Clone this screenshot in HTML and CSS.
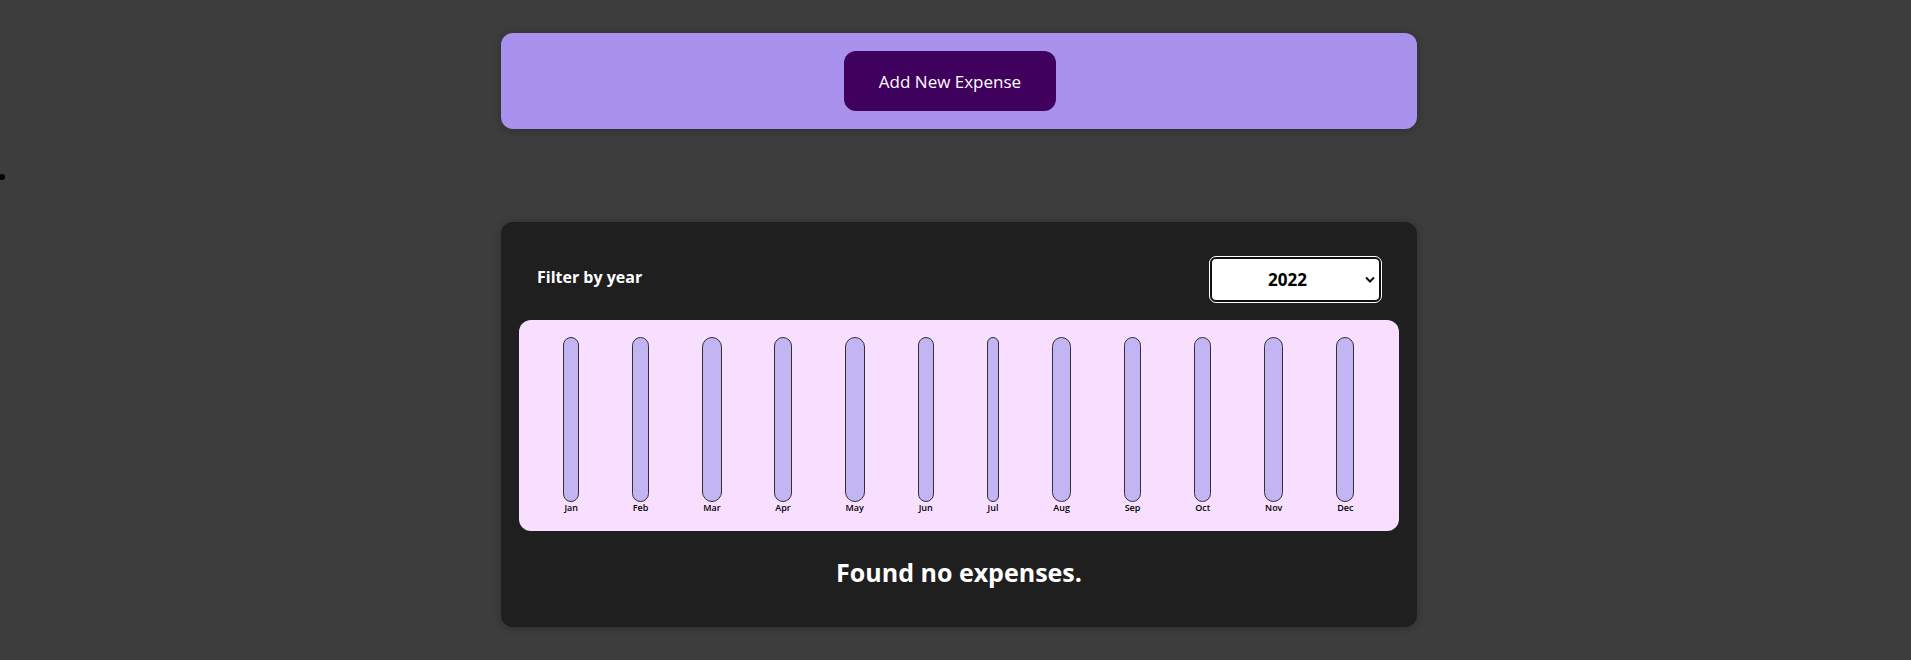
FILE: index.html
```html
<!DOCTYPE html>
<html lang="en">
<head>
<meta charset="utf-8">
<meta name="viewport" content="width=device-width, initial-scale=1">
<title>Expense Tracker</title>
<link rel="stylesheet" href="styles.css">
</head>
<body>
<main class="page">
  <section class="new-expense">
    <button class="new-expense-button" type="button">Add New Expense</button>
  </section>
  <ul class="sections">
    <li class="section">
      <div class="expenses">
        <div class="filter">
          <label class="filter-label" for="year">Filter by year</label>
          <div class="filter-control">
            <select class="filter-select" id="year">
              <option>2025</option>
              <option>2024</option>
              <option>2023</option>
              <option selected>2022</option>
              <option>2021</option>
            </select>
            <svg class="filter-arrow" viewBox="0 0 10 8" aria-hidden="true"><path d="M1 1.5 L5 5.5 L9 1.5" fill="none" stroke="#101010" stroke-width="2"/></svg>
          </div>
        </div>
        <div class="chart">
          <div class="chart-bar"><div class="bar"></div><div class="bar-label">Jan</div></div>
          <div class="chart-bar"><div class="bar"></div><div class="bar-label">Feb</div></div>
          <div class="chart-bar"><div class="bar"></div><div class="bar-label">Mar</div></div>
          <div class="chart-bar"><div class="bar"></div><div class="bar-label">Apr</div></div>
          <div class="chart-bar"><div class="bar"></div><div class="bar-label">May</div></div>
          <div class="chart-bar"><div class="bar"></div><div class="bar-label">Jun</div></div>
          <div class="chart-bar"><div class="bar"></div><div class="bar-label">Jul</div></div>
          <div class="chart-bar"><div class="bar"></div><div class="bar-label">Aug</div></div>
          <div class="chart-bar"><div class="bar"></div><div class="bar-label">Sep</div></div>
          <div class="chart-bar"><div class="bar"></div><div class="bar-label">Oct</div></div>
          <div class="chart-bar"><div class="bar"></div><div class="bar-label">Nov</div></div>
          <div class="chart-bar"><div class="bar"></div><div class="bar-label">Dec</div></div>
        </div>
        <h2 class="fallback">Found no expenses.</h2>
      </div>
    </li>
  </ul>
</main>
</body>
</html>
```
FILE: styles.css
```css
* {
  box-sizing: border-box;
}

body {
  margin: 0;
  background: #3d3d3d;
  color: #000;
  font-family: "Segoe UI", "Open Sans", "Noto Sans", sans-serif;
  font-size: 17px;
  line-height: 24px;
}

.page {
  padding: 33px 0 33px 7px;
}

.new-expense,
.expenses {
  max-width: 916px;
  margin: 0 auto;
  border-radius: 12px;
  box-shadow: 0 1px 8px rgba(0, 0, 0, 0.25);
}

.new-expense {
  display: flex;
  justify-content: center;
  padding: 18px 36px 18px 18px;
  background: #a892ee;
}

.new-expense-button {
  height: 60px;
  padding: 1px 35px 0;
  border: 0;
  border-radius: 12px;
  background: #40005d;
  color: #fff;
  font: inherit;
  cursor: pointer;
}

.sections {
  margin: 45px 0 0;
  padding: 0;
  list-style: none;
}

/* list bullet hanging in the page gutter */
.section::before {
  content: "";
  display: block;
  width: 6px;
  height: 6px;
  margin: 0 0 42px -8px;
  border-radius: 50%;
  background: #000;
}

.expenses {
  padding: 18px;
  background: #1f1f1f;
}

.filter {
  display: flex;
  align-items: center;
  justify-content: space-between;
  padding: 17px 18px 18px;
}

.filter-label {
  padding-bottom: 6px;
  color: #fff;
  font-size: 16px;
  font-weight: bold;
}

.filter-control {
  position: relative;
}

.filter-select {
  display: block;
  width: 171px;
  height: 45px;
  padding: 1px 16px 0 0;
  appearance: none;
  border: 2px solid #101010;
  border-radius: 6px;
  outline: 1px solid #fff;
  background: #fff;
  color: #000;
  font: inherit;
  font-weight: bold;
  text-align: center;
  text-align-last: center;
}

.filter-arrow {
  position: absolute;
  top: 19px;
  right: 6px;
  width: 10px;
  height: 8px;
  pointer-events: none;
}

.chart {
  display: flex;
  justify-content: space-around;
  padding: 17px 18px;
  border-radius: 12px;
  background: #f8dfff;
}

.bar {
  height: 165px;
  border: 1px solid #313131;
  border-radius: 12px;
  background: #c3b4f3;
}

.bar-label {
  padding: 0 1px;
  font-size: 9px;
  font-weight: 600;
  line-height: 12px;
  text-align: center;
}

.fallback {
  margin: 23px 0 19px;
  color: #fff;
  font-size: 25px;
  line-height: 36px;
  text-align: center;
}
```
